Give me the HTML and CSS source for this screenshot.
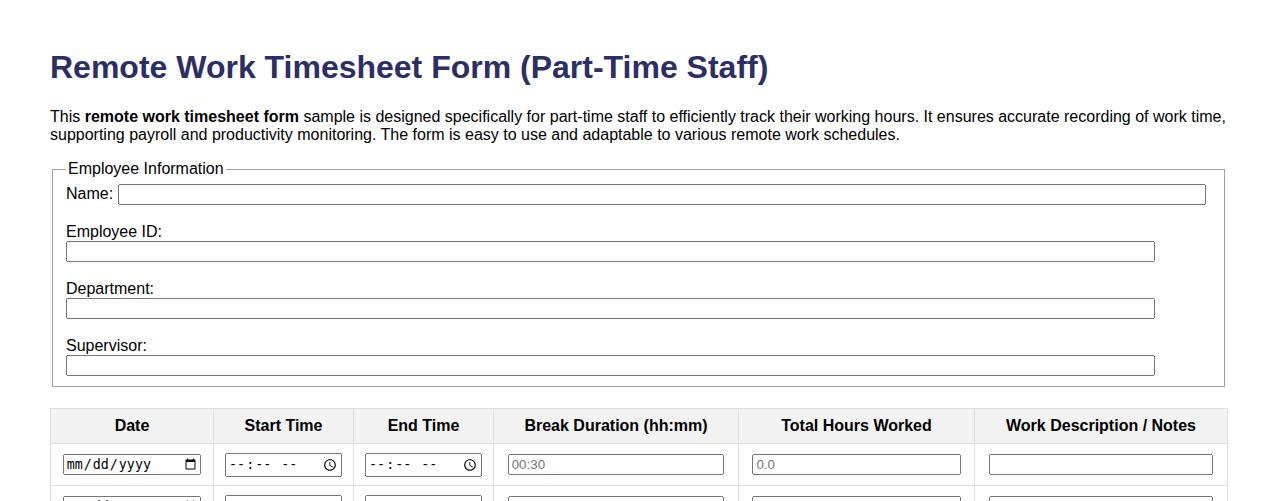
FILE: index.html
```html
<!DOCTYPE html>
<html lang="en">
<head>
<meta charset="utf-8">
<title>Remote Work Timesheet Form (Part-Time Staff)</title>
<link rel="stylesheet" href="styles.css">
</head>
<body>
<div class="page">
  <h1 class="title">Remote Work Timesheet Form (Part-Time Staff)</h1>
  <p class="intro">This <strong>remote work timesheet form</strong> sample is designed specifically for part-time staff to efficiently track their working hours. It ensures accurate recording of work time, supporting payroll and productivity monitoring. The form is easy to use and adaptable to various remote work schedules.</p>
  <form>
    <fieldset class="info">
      <legend>Employee Information</legend>
      <div class="field"><label for="name">Name:</label> <input type="text" id="name"></div>
      <div class="field"><label for="empid">Employee ID:</label> <input type="text" id="empid"></div>
      <div class="field"><label for="dept">Department:</label> <input type="text" id="dept"></div>
      <div class="field last"><label for="sup">Supervisor:</label> <input type="text" id="sup"></div>
    </fieldset>
    <table class="sheet">
      <thead>
        <tr>
          <th class="c-date">Date</th>
          <th class="c-start">Start Time</th>
          <th class="c-end">End Time</th>
          <th class="c-break">Break Duration (hh:mm)</th>
          <th class="c-total">Total Hours Worked</th>
          <th class="c-notes">Work Description / Notes</th>
        </tr>
      </thead>
      <tbody>
        <tr><td><input type="date"></td><td><input type="time"></td><td><input type="time"></td><td><input type="text" placeholder="00:30"></td><td><input type="text" placeholder="0.0"></td><td><input type="text"></td></tr>
        <tr><td><input type="date"></td><td><input type="time"></td><td><input type="time"></td><td><input type="text" placeholder="00:30"></td><td><input type="text" placeholder="0.0"></td><td><input type="text"></td></tr>
        <tr><td><input type="date"></td><td><input type="time"></td><td><input type="time"></td><td><input type="text" placeholder="00:30"></td><td><input type="text" placeholder="0.0"></td><td><input type="text"></td></tr>
        <tr><td><input type="date"></td><td><input type="time"></td><td><input type="time"></td><td><input type="text" placeholder="00:30"></td><td><input type="text" placeholder="0.0"></td><td><input type="text"></td></tr>
        <tr><td><input type="date"></td><td><input type="time"></td><td><input type="time"></td><td><input type="text" placeholder="00:30"></td><td><input type="text" placeholder="0.0"></td><td><input type="text"></td></tr>
      </tbody>
    </table>
  </form>
</div>
</body>
</html>
```
FILE: styles.css
```css
* {
  box-sizing: border-box;
}
body {
  margin: 0;
  font-family: "Liberation Sans", Arial, sans-serif;
  font-size: 16px;
  color: #000;
  background: #fff;
}
.page {
  padding: 28px 50px;
}
.title {
  color: #2c2f66;
  font-size: 32px;
  margin: 21px 0 22px;
}
.intro {
  margin: 16px 0;
  line-height: 18px;
}
.info {
  margin: 0 3px 21px 2px;
  padding: 5.6px 12px 10px 13px;
  border: 1px solid #a0a0a0;
}
.info legend {
  padding: 0 2px;
}
.field {
  margin-bottom: 18px;
}
.field.last {
  margin-bottom: 0;
}
.info input {
  width: 95%;
}
.sheet {
  width: 100%;
  border-collapse: collapse;
  table-layout: fixed;
}
.sheet th,
.sheet td {
  border: 1px solid #ddd;
  padding: 8px;
  text-align: center;
}
.sheet td {
  padding: 9px 8px 8px;
}
.sheet th {
  background: #f2f2f2;
  font-weight: bold;
}
.c-date { width: 163px; }
.c-start { width: 140px; }
.c-end { width: 140px; }
.c-break { width: 245px; }
.c-total { width: 236px; }
.sheet input {
  width: 95%;
}
```
